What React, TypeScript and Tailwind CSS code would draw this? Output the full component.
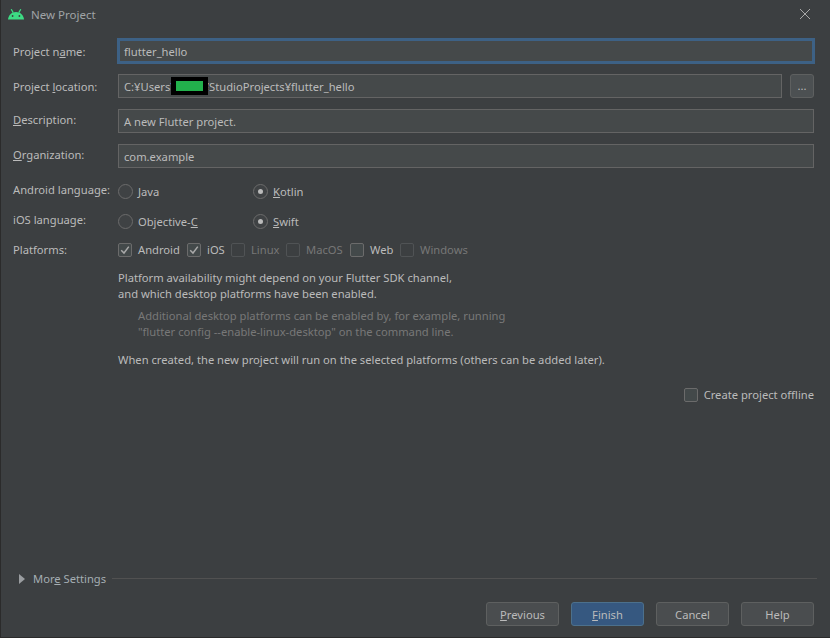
import React from 'react';

const font = "[font-family:'Noto_Sans','Open_Sans',sans-serif]";

// Field with darcula styling, the focused one gets the blue ring
const Field = ({ children, focused, className = '' }: { children: React.ReactNode; focused?: boolean; className?: string }) => (
  <div
    className={`h-6 min-w-0 flex-1 flex items-center pt-px bg-[#45494a] text-[#bbbbbb] whitespace-nowrap ${
      focused ? 'border-[2px] border-[#3d6185] outline outline-1 outline-[#3d6185] pl-1' : 'border border-[#646464] pl-[5px]'
    } ${className}`}
  >
    {children}
  </div>
);

const Row = ({ label, children, lift }: { label: React.ReactNode; children: React.ReactNode; lift?: boolean }) => (
  <div className="flex items-center h-6 mb-[11px]">
    <div className={`w-[105px] shrink-0 text-[#bbbbbb] ${lift ? 'pb-[3px]' : 'pt-px'}`}>{label}</div>
    {children}
  </div>
);

const Radio = ({ label, checked, className = '' }: { label: React.ReactNode; checked?: boolean; className?: string }) => (
  <div className={`flex items-center text-[#bbbbbb] ${className}`}>
    <div className="w-[15px] h-[15px] rounded-full border border-[#6b6b6b] bg-[#3f4244] flex items-center justify-center mr-[5px]">
      {checked && <div className="w-[5px] h-[5px] rounded-full bg-[#bbbbbb]" />}
    </div>
    {label}
  </div>
);

const Check = ({ label, checked, muted, className = '' }: { label: string; checked?: boolean; muted?: boolean; className?: string }) => (
  <div className={`flex items-center ${muted ? 'text-[#777777]' : 'text-[#bbbbbb]'} ${className}`}>
    <div
      className={`w-[14px] h-[14px] rounded-[2px] border mr-[6px] flex items-center justify-center shrink-0 ${
        muted ? 'border-[#505355]' : 'border-[#6b6b6b] bg-[#43494a]'
      }`}
    >
      {checked && (
        <svg width="10" height="10" viewBox="0 0 10 10" fill="none">
          <path d="M1.2 5.2 L4 8 L8.8 1.6" stroke="#a9a9a9" strokeWidth="1.5" />
        </svg>
      )}
    </div>
    {label}
  </div>
);

const Btn = ({ children, primary }: { children: React.ReactNode; primary?: boolean }) => (
  <div
    className={`w-[73px] h-6 rounded-[3px] border flex items-center justify-center pt-px ${
      primary ? 'bg-[#365880] border-[#4c708c] text-[#bbbbbb]' : 'bg-[#4a4d4f] border-[#5e6060] text-[#bbbbbb]'
    }`}
  >
    {children}
  </div>
);

export default function App() {
  return (
    <div className={`w-[830px] h-[638px] flex flex-col bg-[#3c3f41] border-l border-b border-[#2b2b2b] text-[11.2px] leading-4 overflow-hidden ${font}`}>
      {/* title bar */}
      <div className="h-[39px] shrink-0 flex items-start pl-[7px] pr-[19px] pt-[8px]">
        <svg width="16" height="11" viewBox="0 0 16 11" className="mr-[7px] mt-px">
          <path d="M0 10.5 C0.3 6.5 3.5 3 8 3 C12.5 3 15.700 6.5 16 10.5 Z" fill="#3ddc84" />
          <path d="M3.200 0.2 L5.200 3.600 M12.800 0.2 L10.800 3.600" stroke="#3ddc84" strokeWidth="1.2" />
          <circle cx="4.600" cy="7" r="0.9" fill="#3c3f41" />
          <circle cx="11.400" cy="7" r="0.9" fill="#3c3f41" />
        </svg>
        <span className="text-[#a0a4a6] text-[11.5px] -mt-px">New Project</span>
        <svg width="12" height="12" viewBox="0 0 12 12" className="ml-auto">
          <path d="M1 1 L11 11 M11 1 L1 11" stroke="#a8a8a8" strokeWidth="1" />
        </svg>
      </div>

      <div className="pl-3 pr-4 flex-1 flex flex-col">
        <Row label={<>Project n<u>a</u>me:</>}>
          <Field focused>flutter_hello</Field>
        </Row>
        <Row label={<>Project <u>l</u>ocation:</>}>
          <Field>
            C:¥Users¥
            {/* name blacked out in the screenshot */}
            <span className="relative z-10 inline-flex items-center justify-center w-[37px] h-[18px] bg-black -ml-[6px] -mr-[5px] -mt-px">
              <span className="block w-[27px] h-[10px] bg-[#22b14c]" />
            </span>
            ¥StudioProjects¥flutter_hello
          </Field>
          <div className="ml-2 w-6 h-6 rounded-[3px] bg-[#4c5052] border border-[#5e6060] flex items-center justify-center text-[#bbbbbb]">...</div>
        </Row>
        <Row lift label={<><u>D</u>escription:</>}>
          <Field>A new Flutter project.</Field>
        </Row>
        <Row lift label={<><u>O</u>rganization:</>}>
          <Field>com.example</Field>
        </Row>

        <div className="flex items-center h-[15px] mt-[5px] mb-[15px]">
          <div className="w-[105px] shrink-0 text-[#bbbbbb] pb-[4px]">Android language:</div>
          <Radio className="w-[135px]" label={<><u>J</u>ava</>} />
          <Radio checked label={<><u>K</u>otlin</>} />
        </div>
        <div className="flex items-center h-[15px] mb-[14px]">
          <div className="w-[105px] shrink-0 text-[#bbbbbb] pb-[4px]">iOS language:</div>
          <Radio className="w-[135px]" label={<>Objective-<u>C</u></>} />
          <Radio checked label={<><u>S</u>wift</>} />
        </div>
        <div className="flex items-center h-[14px]">
          <div className="w-[105px] shrink-0 text-[#bbbbbb]">Platforms:</div>
          <Check className="w-[69px]" checked label="Android" />
          <Check className="w-[44px]" checked label="iOS" />
          <Check className="w-[55px]" muted label="Linux" />
          <Check className="w-[64px]" muted label="MacOS" />
          <Check className="w-[50px]" label="Web" />
          <Check muted label="Windows" />
        </div>

        <div className="pl-[105px] pt-[13px] text-[#bbbbbb]">
          <p>Platform availability might depend on your Flutter SDK channel,</p>
          <p>and which desktop platforms have been enabled.</p>
          <div className="pl-5 pt-[6px] text-[#787878]">
            <p>Additional desktop platforms can be enabled by, for example, running</p>
            <p>"flutter config --enable-linux-desktop" on the command line.</p>
          </div>
          <p className="pt-3">When created, the new project will run on the selected platforms (others can be added later).</p>
        </div>

        <div className="flex justify-end mt-[19px]">
          <Check label="Create project offline" />
        </div>

        <div className="mt-auto flex items-center pl-[6px] text-[#a5aeb3] -mr-[3px]">
          <svg width="6" height="10" viewBox="0 0 6 10" className="mr-[8px]">
            <path d="M0 0 L6 5 L0 10 Z" fill="#9a9da0" />
          </svg>
          <span className="pt-px">Mor<u>e</u> Settings</span>
          <div className="ml-[6px] flex-1 h-px bg-[#515151]" />
        </div>

        <div className="flex justify-end gap-3 mt-[15px] mb-[11px]">
          <Btn><span><u>P</u>revious</span></Btn>
          <Btn primary><span><u>F</u>inish</span></Btn>
          <Btn>Cancel</Btn>
          <Btn>Help</Btn>
        </div>
      </div>
    </div>
  );
}
